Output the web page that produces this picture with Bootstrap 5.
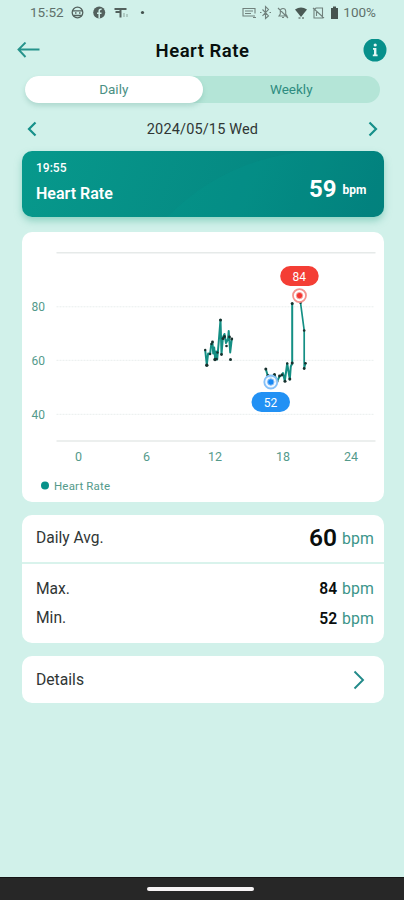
<!DOCTYPE html>
<html lang="en">
<head>
<meta charset="utf-8">
<meta name="viewport" content="width=device-width, initial-scale=1">
<title>Heart Rate</title>
<link href="https://cdn.jsdelivr.net/npm/bootstrap@5.3.0/dist/css/bootstrap.min.css" rel="stylesheet">
<style>
body{font-family:Roboto,"Liberation Sans",sans-serif;background:#d1f1ea;color:#303635;line-height:1;letter-spacing:0}
svg{display:block;flex:none}
.screen{height:900px;overflow:hidden}
.status-bar{height:26px;padding:0 28px 0 30px;font-size:13.5px;color:#5f706b}
.title-bar{height:50px;padding:0 17px}
.title-bar h1{font-size:18.5px;font-weight:600;color:#08100e;letter-spacing:.5px;padding-left:1px}
.segments{height:27px;margin:0 24px 0 25px;background:#b4e5d7;font-size:13.5px;color:#2e8c80;border-radius:14px}
.segments>div{height:27px;line-height:26px}
.segment-on{background:#fff;border-radius:14px;box-shadow:0 3px 5px #68a99855;color:#4b9084}
.date-bar{height:48px;padding:4px 26px 0 27px;font-size:14.5px;letter-spacing:.15px}
.date-bar span{padding-top:2px}
.panel{margin:0 20.5px 0 21.5px;border-radius:10px;background:#fff}
.current{height:66px;padding:0 17px 0 14.5px;color:#fff;background:linear-gradient(110deg,#07998c,#058a83 60%,#037b79);box-shadow:0 4px 7px #53b8a080;overflow:hidden}
.time-label{font-size:12px;font-weight:500;margin-top:11px}
.metric-label{font-size:16px;font-weight:600;margin-top:12px}
.now-value{font-size:24px;padding-top:26px}
.now-unit{font-size:12px;margin-left:6px;position:relative;top:-3px}
.chart-panel{height:270px;margin-top:15px}
.summary{height:128px;margin-top:13px;font-size:15.6px}
.average{height:49px;border-bottom:2px solid #d9f3ec}
.row-pad{padding:0 9.5px 0 14.5px}
.unit{color:#3b958a;font-size:15.8px;letter-spacing:.1px;margin-left:5px}
.value{font-weight:600;color:#0a0e0d}
.value-lg{font-size:24.500px}
.stat-line{height:29.5px;padding-top:6px}
.details{height:47px;margin-top:13px;font-size:15.7px;padding-right:19px}
.home-bar{height:23px;background:#272727;border-top:1px solid #151515}
.home-pill{width:107px;height:4px;border-radius:2px;background:#f7f4f5;margin-right:3px}
</style>
<script src="https://cdn.jsdelivr.net/npm/bootstrap@5.3.0/dist/js/bootstrap.bundle.min.js"></script>
</head>
<body>
<main class="screen d-flex flex-column">
  <div class="status-bar d-flex align-items-center justify-content-between">
    <div class="d-flex align-items-center"><span>15:52</span>
      <svg width="90" height="16" viewBox="-1 0 90 16" fill="none" stroke="#53615d" stroke-width="1.3">
        <circle cx="12.5" cy="7.5" r="5.3"/><path d="M7.500 5.800h10M8.500 10.500h8M10 8h1.500M14 8h1.500"/>
        <circle cx="34.200" cy="7.500" r="6" fill="#53615d" stroke="none"/><path d="M34.200 13.500V6q0-2 2.400-1.800M32 8.300h4.500" stroke="#d1f1ea" stroke-width="1.500"/>
        <path d="M49.500 4h12M50.500 7h6M55.500 4v8.500" stroke-width="2"/><path d="M59 8v4M62 9v3" stroke="#9db8b0"/>
        <circle cx="77.500" cy="7.500" r="1.600" fill="#43514d" stroke="none"/>
      </svg></div>
    <div class="d-flex align-items-center">
      <svg width="101" height="16" viewBox="0 0 101 16" fill="none" stroke="#71827d" stroke-width="1.100">
        <path d="M13 11H1V3.500h12v5M3 6h8M3 8.500h6M11 12.500h3"/>
        <path d="M20.500 4.500l6 6.400L23.500 13.500V1.500l3 3-6 6.400M18 7.500h1.500M27.500 7.500H29"/>
        <path d="M37 11h8l-1.300-2V6q-.2-2.500-2.700-2.500T38.300 6v3zM40 12.500h2M36 3l10 10"/>
        <path d="M53 4.500q6-4.200 12 0L59 12z" fill="#4a5954" stroke="none"/><path d="M56.500 13h2M60 13h2" stroke-width="1.500"/>
        <path d="M72 5l2-2h6.500v10H72zM71 3l11 10M74.500 7v4"/>
        <path d="M89 3h2V1.500h3V3h2v11h-7z" fill="#46544f" stroke="none"/>
      </svg><span>100%</span></div>
  </div>
  <header class="title-bar d-flex align-items-center justify-content-between">
    <svg width="24" height="18" viewBox="0 0 24 18" fill="none" stroke="#26938b" stroke-width="1.900"><path d="M8.500 0.500L1.500 7.500l7 7.500M1.500 7.500H22.500"/></svg>
    <h1 class="m-0">Heart Rate</h1>
    <svg width="24" height="24" viewBox="0 0 24 24"><circle cx="12" cy="11" r="11.500" fill="#07908b"/><g fill="#e5f7f4"><circle cx="12.200" cy="6" r="1.600"/><path d="M10 9h3.400v6.500h1.200v1.800H9.800v-1.800H11v-4.700h-1z"/></g></svg>
  </header>
  <div class="segments d-flex text-center">
    <div class="segment-on w-50">Daily</div><div class="w-50">Weekly</div>
  </div>
  <div class="date-bar d-flex align-items-center justify-content-between">
    <svg width="10" height="16" viewBox="0 0 10 16" fill="none" stroke="#16908a" stroke-width="2.200"><path d="M8.500 1.500L2 8l6.500 6.500"/></svg>
    <span>2024/05/15 Wed</span>
    <svg width="10" height="16" viewBox="0 0 10 16" fill="none" stroke="#16908a" stroke-width="2.200"><path d="M1.500 1.500L8 8l-6.500 6.500"/></svg>
  </div>
  <section class="panel current position-relative">
    <svg class="position-absolute top-0 start-0" width="362" height="66" viewBox="0 0 362 66"><path d="M145 66Q205 6 290 0H362V66Z" fill="#00a495" opacity=".16"/></svg>
    <div class="position-relative d-flex h-100 justify-content-between">
      <div><div class="time-label">19:55</div><div class="metric-label">Heart Rate</div></div>
      <div class="d-flex align-items-baseline now-value"><b>59</b><b class="now-unit">bpm</b></div>
    </div>
  </section>
  <section class="panel chart-panel">
    <svg width="362" height="270" viewBox="21.500 232 362 270" font-size="12" fill="#549a8b">
      <g stroke="#e6eae9" stroke-width="1.500"><path d="M56 252.700H375M56 441H375"/><path d="M56 306.800H373M56 360.300H373M56 414.300H373" stroke="#e9eeed" stroke-width="1" stroke-dasharray="2 1"/></g>
      <g text-anchor="end"><text x="44.500" y="311">80</text><text x="44.500" y="364.500">60</text><text x="44.500" y="418.500">40</text></g>
      <g text-anchor="middle" font-size="12.500"><text x="78" y="461">0</text><text x="146" y="461">6</text><text x="214.500" y="461">12</text><text x="282.500" y="461">18</text><text x="350.500" y="461">24</text></g>
      <circle cx="44.500" cy="485.500" r="4" fill="#07928a"/><text x="53.500" y="489.500" font-size="11.500" textLength="56">Heart Rate</text>
      <g fill="none" stroke="#148f84" stroke-width="2" stroke-linejoin="round">
        <path d="M204.700 350l1.600 15 1.300-11.500 2 .5 1.200-10 1.200-1.500.7 11 1-6 1 12 1-8 1 8 1.300-15 2-24.500 1 34 1.500-17 1.500-3 1.500 9 2-4 .7-8 1.500 21.500L231.300 339"/>
        <path d="M265.300 369l2 7 3 1 3.700-2.500 2.500 7 2.500-5 2.300-1.500 1.200-2 1.800 8 2.400-17.500 2.600 16 1-13 1.400-3V303.500"/>
        <path d="M300 302.500l3.700 28v38l1.300-5" stroke-width="1.700"/>
      </g>
      <g fill="#17312e">
        <circle cx="204.700" cy="350" r="1.200"/><circle cx="206.300" cy="365.300" r="1.700"/><circle cx="209.500" cy="354" r="1.300"/><circle cx="212" cy="342" r="1.400"/><circle cx="211" cy="344" r="1.200"/><circle cx="214.500" cy="359.500" r="1.700"/><circle cx="216" cy="359" r="1.300"/><circle cx="217" cy="352.500" r="1.200"/><circle cx="220" cy="320" r="1.500"/><circle cx="221" cy="354.500" r="1.400"/><circle cx="224" cy="336.500" r="1.500"/><circle cx="222.500" cy="338.500" r="1.500"/><circle cx="226" cy="346" r="1.300"/><circle cx="229" cy="337" r="1.400"/><circle cx="231.300" cy="339" r="1.400"/><circle cx="230" cy="359.500" r="1.500"/>
        <circle cx="265.300" cy="369" r="1.500"/><circle cx="267.500" cy="375.500" r="1.500"/><circle cx="274" cy="374.500" r="1.500"/><circle cx="276.500" cy="381.500" r="1.400"/><circle cx="279" cy="376" r="1.400"/><circle cx="281.500" cy="375" r="1.400"/><circle cx="284.500" cy="381.300" r="1.500"/><circle cx="286.700" cy="363.500" r="1.200"/><circle cx="289.300" cy="379" r="1.500"/><circle cx="291.700" cy="363" r="1.500"/><circle cx="291.700" cy="303.500" r="1.500"/><circle cx="300" cy="302.500" r="1.400"/><circle cx="303.700" cy="330.500" r="1.300"/><circle cx="305" cy="363.300" r="1.300"/><circle cx="303.700" cy="368.500" r="1.400"/>
      </g>
      <circle cx="299" cy="295.600" r="6.500" fill="#fff" stroke="#f5938e" stroke-width="1.800"/><circle cx="299" cy="295.600" r="3.200" fill="#f33632" stroke="#f5aaa5"/>
      <circle cx="270.300" cy="382" r="6.500" fill="#edf6ff" fill-opacity=".85" stroke="#85c0f8" stroke-width="1.800"/><circle cx="270.300" cy="382" r="3.200" fill="#1788f3" stroke="#86bdf6"/>
      <rect x="279.700" y="266" width="38.500" height="20" rx="10" fill="#f43e35"/><rect x="251" y="392" width="38.500" height="20" rx="10" fill="#2291f4"/>
      <g fill="#fff" text-anchor="middle" font-size="12"><text x="298.700" y="280.700">84</text><text x="270" y="406.500">52</text></g>
    </svg>
  </section>
  <section class="panel summary">
    <div class="row-pad average d-flex align-items-center justify-content-between"><span>Daily Avg.</span><span class="d-flex align-items-center"><span class="value value-lg">60</span><span class="unit">bpm</span></span></div>
    <div class="row-pad pt-2">
      <div class="stat-line d-flex align-items-center justify-content-between"><span>Max.</span><span><span class="value">84</span><span class="unit">bpm</span></span></div>
      <div class="stat-line d-flex align-items-center justify-content-between"><span>Min.</span><span><span class="value">52</span><span class="unit">bpm</span></span></div>
    </div>
  </section>
  <section class="panel row-pad details d-flex align-items-center justify-content-between"><span>Details</span>
    <svg width="12" height="20" viewBox="0 0 12 20" fill="none" stroke="#228a89" stroke-width="1.900"><path d="M1.500 1.500L10 10l-8.500 8.500"/></svg>
  </section>
  <footer class="home-bar mt-auto d-flex align-items-center justify-content-center"><div class="home-pill"></div></footer>
</main>
</body>
</html>
